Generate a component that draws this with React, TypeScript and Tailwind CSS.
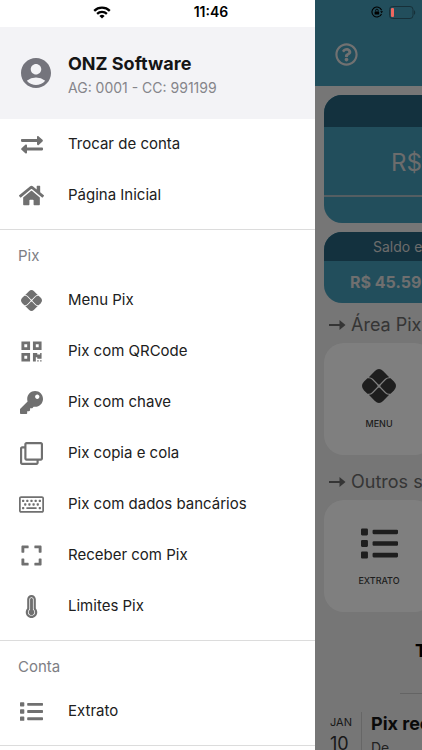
import type { ReactNode } from "react";
import {
  FaExpand,
  FaHome,
  FaKey,
  FaList,
  FaQrcode,
  FaRegClone,
  FaRegKeyboard,
  FaRegQuestionCircle,
  FaThermometerFull,
} from "react-icons/fa";
import { MdAccountCircle } from "react-icons/md";

function PixIcon({ size }: { size: number }) {
  return (
    <svg width={size} height={size} viewBox="0 0 100 100" fill="currentColor" aria-hidden="true">
      <path d="M38 6 Q50 -6 62 6 L80 24 Q73 24 68 29 L53 44 Q50 47 47 44 L32 29 Q27 24 20 24 Z" />
      <path d="M38 94 Q50 106 62 94 L80 76 Q73 76 68 71 L53 56 Q50 53 47 56 L32 71 Q27 76 20 76 Z" />
      <path d="M16 27.5 H20 Q25 27.5 29 31 L44 46 Q48 50 44 54 L29 69 Q25 72.5 20 72.5 H16 L6 63 Q-6 50 6 37 Z" />
      <path d="M84 27.5 H80 Q75 27.5 71 31 L56 46 Q52 50 56 54 L71 69 Q75 72.5 80 72.5 H84 L94 63 Q106 50 94 37 Z" />
    </svg>
  );
}

function SwapIcon() {
  return (
    <svg width="24" height="20" viewBox="0 0 24 20" fill="currentColor" aria-hidden="true">
      <path d="M2 4.1h15V2.1c0-.9 1-1.4 1.7-.7l3.8 3.4c.5.5.5 1.2 0 1.6l-3.8 3.5c-.7.6-1.700.2-1.700-.8V7H2c-.5 0-1-.4-1-.9V5c0-.5.5-.9 1-.9z" />
      <path d="M22 12.6H7v-2.1c0-.9-1-1.4-1.7-.7l-3.8 3.4c-.5.5-.5 1.200 0 1.600l3.8 3.5c.7.6 1.7.2 1.7-.8v-2h15c.5 0 1-.4 1-.9v-1.100c0-.5-.5-1-1-1z" />
    </svg>
  );
}

function ArrowIcon() {
  return (
    <svg width="17" height="12" viewBox="0 0 17 12" aria-hidden="true">
      <path d="M0 6h12" stroke="currentColor" strokeWidth="2" />
      <path d="M10.5 1 16.500 6l-6 5z" fill="currentColor" />
    </svg>
  );
}

function StatusBar() {
  return (
    <div className="pointer-events-none absolute inset-x-0 top-0 z-20 grid h-6 grid-cols-3 items-center text-black">
      <svg className="ml-[93px]" width="18" height="13" viewBox="0 0 18 13" fill="none" stroke="currentColor" strokeWidth="2.3" aria-hidden="true">
        <path d="M1.2 4.8a11.2 11.2 0 0 1 15.6 0" />
        <path d="M4.1 7.8a7.1 7.1 0 0 1 9.8 0" />
        <path d="M9 12.6 6.4 10a3.8 3.8 0 0 1 5.2 0z" fill="currentColor" stroke="none" />
      </svg>
      <time className="text-center text-sm font-semibold">11:46</time>
      <div className="flex items-center justify-end gap-[6px] pr-[6px]">
        <svg width="12" height="12" viewBox="0 0 12 12" fill="none" stroke="currentColor" aria-hidden="true">
          <path d="M10.6 4.2A5 5 0 1 0 10.5 8" strokeWidth="1.1" />
          <path d="M9.2 5.2h2.8l-1.4 2.1z" fill="currentColor" stroke="none" />
          <rect x="3.6" y="5.4" width="4.6" height="3.2" rx=".5" fill="currentColor" stroke="none" />
          <path d="M4.6 5.4V4.5a1.3 1.3 0 0 1 2.6 0v.9" strokeWidth=".9" />
        </svg>
        <svg width="27" height="13" viewBox="0 0 27 13" aria-hidden="true">
          <rect x=".5" y=".5" width="23.5" height="12" rx="3" fill="none" stroke="#173039" />
          <rect x="2" y="2" width="3" height="9" rx="1" fill="#ee675f" />
          <path d="M25 4.2c1.6.6 1.6 4 0 4.6z" fill="#173039" />
        </svg>
      </div>
    </div>
  );
}

interface MenuItemProps {
  icon: ReactNode;
  label: string;
}

function MenuItem({ icon, label }: MenuItemProps) {
  return (
    <li>
      <button className="flex h-[51px] w-full items-center gap-6 pl-[19px] text-left">
        <span className="flex w-[25px] items-center justify-center text-[#707070]">{icon}</span>
        <span className="text-[#202020]">{label}</span>
      </button>
    </li>
  );
}

interface MenuSectionProps {
  title?: string;
  items: MenuItemProps[];
}

function MenuSection({ title, items }: MenuSectionProps) {
  return (
    <section className="border-b border-[#dcdcdc] pb-2">
      {title && <h2 className="px-[18px] pt-[14px] pb-[7px] leading-6 text-[#7e7e84]">{title}</h2>}
      <ul>
        {items.map((item) => (
          <MenuItem key={item.label} {...item} />
        ))}
      </ul>
    </section>
  );
}

const mainItems: MenuItemProps[] = [
  { icon: <SwapIcon />, label: "Trocar de conta" },
  { icon: <FaHome size={25} />, label: "Página Inicial" },
];

const pixItems: MenuItemProps[] = [
  { icon: <PixIcon size={21} />, label: "Menu Pix" },
  { icon: <FaQrcode size={23} />, label: "Pix com QRCode" },
  { icon: <FaKey size={23} />, label: "Pix com chave" },
  { icon: <FaRegClone size={23} />, label: "Pix copia e cola" },
  { icon: <FaRegKeyboard size={25} />, label: "Pix com dados bancários" },
  { icon: <FaExpand size={23} />, label: "Receber com Pix" },
  { icon: <FaThermometerFull size={23} />, label: "Limites Pix" },
];

const accountItems: MenuItemProps[] = [{ icon: <FaList size={23} />, label: "Extrato" }];

function Drawer() {
  return (
    <nav className="w-3/4 max-w-[315px] shrink-0 bg-white pt-[27px] text-[15px]">
      <header className="flex items-center gap-[14px] bg-[#f3f3f6] py-5 pl-[18px]">
        <MdAccountCircle size={36} className="text-[#74747c]" />
        <div className="pt-1">
          <h1 className="text-lg leading-[26px] font-bold text-[#151515]">ONZ Software</h1>
          <p className="text-sm leading-[22px] text-[#85858a]">AG: 0001 - CC: 991199</p>
        </div>
      </header>
      <MenuSection items={mainItems} />
      <MenuSection title="Pix" items={pixItems} />
      <MenuSection title="Conta" items={accountItems} />
    </nav>
  );
}

function ShortcutSection({ title, label, icon }: { title: string; label: string; icon: ReactNode }) {
  return (
    <section className="pb-[5px]">
      <h2 className="flex items-center gap-[5px] pt-2 pb-1 pl-[5px] text-lg leading-7 whitespace-nowrap text-[#6a6a6a]">
        <ArrowIcon />
        {title}
      </h2>
      <button className="flex h-28 w-[110px] flex-col items-center rounded-[20px] bg-white pt-[25px] text-[#3c3c3c]">
        <span className="flex h-9 items-center">{icon}</span>
        <span className="mt-3 text-[9px] leading-4 font-medium">{label}</span>
      </button>
    </section>
  );
}

function AccountPage() {
  return (
    <main className="relative w-full shrink-0 overflow-hidden bg-[#ececec]">
      <header className="flex h-[86px] items-end bg-[#449cb8] pb-5 pl-5">
        <button aria-label="Ajuda" className="text-[#e2e2e2]">
          <FaRegQuestionCircle size={23} />
        </button>
      </header>

      <div className="px-[9px] pt-[9px]">
        <section className="overflow-hidden rounded-[18px] bg-[#449cb8]">
          <div className="h-8 bg-[#27627c]" />
          <p className="border-b-2 border-[#a9bcc4] pt-1 pl-[67px] text-2xl leading-[64px] text-[#d8d8d8]">R$</p>
          <div className="h-[26px]" />
        </section>

        <section className="mt-[9px] w-1/2 overflow-hidden rounded-[18px] bg-[#449cb8] whitespace-nowrap">
          <h2 className="bg-[#27627c] pl-[49px] text-sm leading-[29px] text-[#d8d8d8]">Saldo em conta</h2>
          <p className="pl-[26px] leading-[42px] font-bold text-[#dedede]">R$ 45.590,00</p>
        </section>

        <ShortcutSection title="Área Pix" label="MENU" icon={<PixIcon size={34} />} />
        <ShortcutSection title="Outros serviços" label="EXTRATO" icon={<FaList size={37} />} />

        <section className="pt-[22px]">
          <h2 className="pl-[91px] text-lg leading-6 font-bold">Transações</h2>
          <hr className="mt-[30px] ml-[76px] border-[#c8c8c8]" />
          <article className="mt-[18px] flex whitespace-nowrap">
            <div className="w-[38px] border-r border-[#cccccc] pl-[6px] text-[#333333]">
              <p className="text-[11px] leading-5">JAN</p>
              <p className="text-lg leading-6">10</p>
            </div>
            <div className="pl-[9px]">
              <h3 className="text-lg leading-6 font-bold text-[#151515]">Pix recebido</h3>
              <p className="text-sm leading-6 text-[#444444]">De</p>
            </div>
          </article>
        </section>
      </div>

      <div className="absolute inset-0 bg-black/50" />
    </main>
  );
}

export default function App() {
  return (
    <div className="relative flex h-screen overflow-hidden font-[Inter,sans-serif] text-base">
      <StatusBar />
      <Drawer />
      <AccountPage />
    </div>
  );
}
